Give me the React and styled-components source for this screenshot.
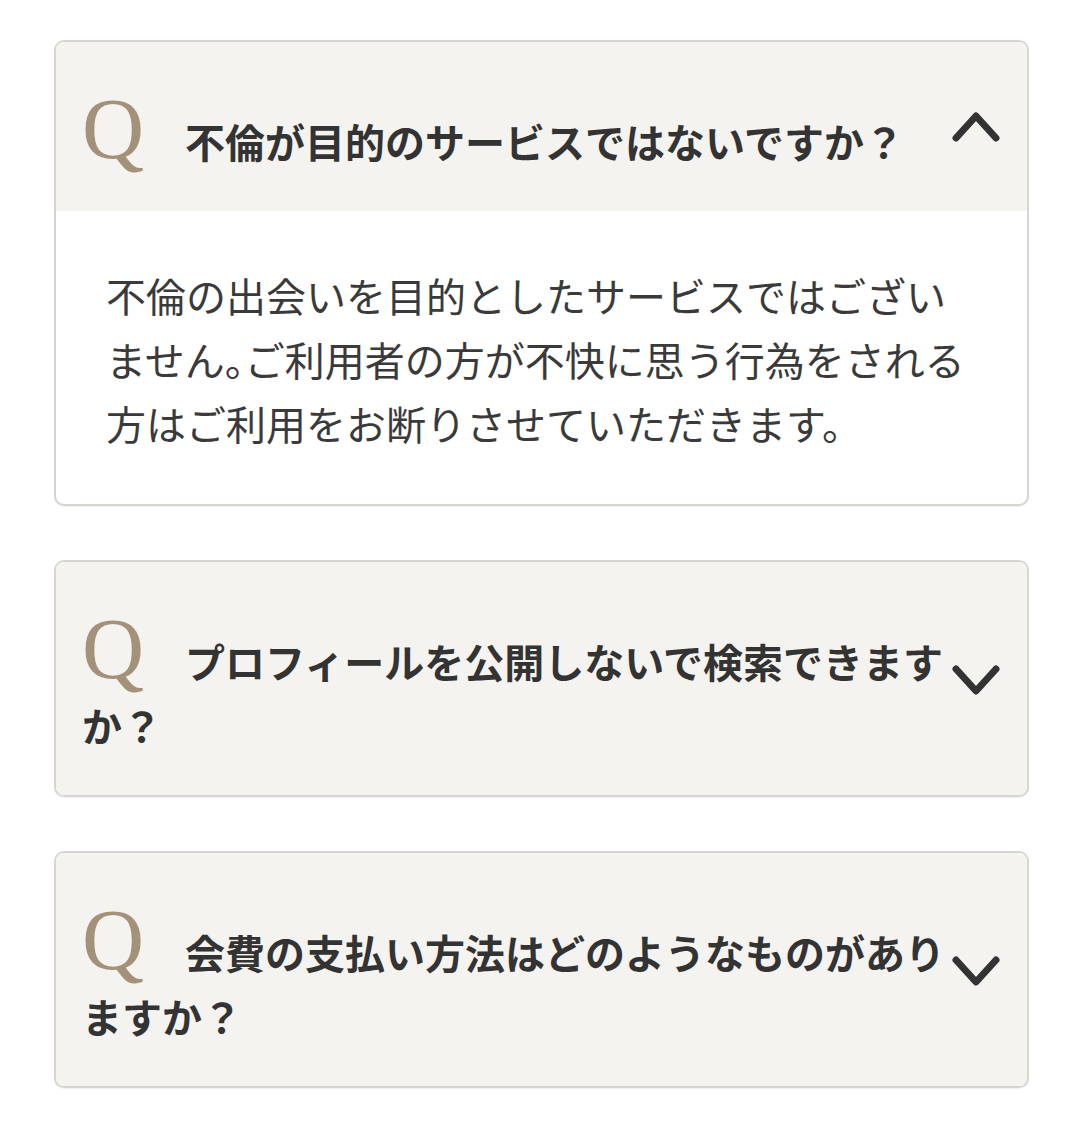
import React from "react";
import styled, { createGlobalStyle } from "styled-components";

const Global = createGlobalStyle`
  html, body { margin: 0; padding: 0; background: #ffffff; }
  body { font-family: "Noto Sans CJK JP", "Noto Sans", sans-serif; color: #333333; }
`;

const Page = styled.div`
  padding: 40px 51px 40px 54px;
  display: flex;
  flex-direction: column;
  gap: 54px;
`;

const Card = styled.section`
  border: 2px solid #d7d5cf;
  border-radius: 10px;
  overflow: hidden;
  background: #ffffff;
  box-shadow: 0 1px 1px rgba(0, 0, 0, 0.06);
`;

const Header = styled.div`
  position: relative;
  background: #f4f3f0;
  padding: 55px 70px 38px 26px;
  font-size: 40px;
  line-height: 64px;
  font-weight: 700;
  color: #333333;
`;

const QMark = styled.span`
  font-family: "Liberation Serif", "Times New Roman", serif;
  font-weight: 400;
  font-size: 86px;
  line-height: 64px;
  color: #a39279;
  margin-right: 41px;
`;

const Chevron = styled.svg`
  position: absolute;
  right: 27px;
  top: ${(p) => (p.$open ? "68px" : "101px")};
  width: 48px;
  height: 34px;
`;

const Body = styled.div`
  padding: 52px 52px 49px 50px;
  font-size: 40px;
  line-height: 64px;
  font-weight: 400;
  color: #3a3a3a;
`;

const Punct = styled.span`
  font-feature-settings: "halt";
`;

const Arrow = ({ open }) => (
  <Chevron $open={open} viewBox="0 0 48 34" aria-hidden="true">
    <polyline
      points={open ? "4,28 24,6 44,28" : "4,6 24,28 44,6"}
      fill="none"
      stroke="#333333"
      strokeWidth="7"
      strokeLinecap="round"
      strokeLinejoin="round"
    />
  </Chevron>
);

const Item = ({ question, open, children }) => (
  <Card>
    <Header>
      <QMark>Q</QMark>
      {question}
      <Arrow open={open} />
    </Header>
    {open && <Body>{children}</Body>}
  </Card>
);

export default function App() {
  return (
    <>
      <Global />
      <Page>
        <Item question="不倫が目的のサービスではないですか？" open>
          不倫の出会いを目的としたサービスではございません<Punct>。</Punct>ご利用者の方が不快に思う行為をされる方はご利用をお断りさせていただきます。
        </Item>
        <Item question="プロフィールを公開しないで検索できますか？" />
        <Item question="会費の支払い方法はどのようなものがありますか？" />
      </Page>
    </>
  );
}
